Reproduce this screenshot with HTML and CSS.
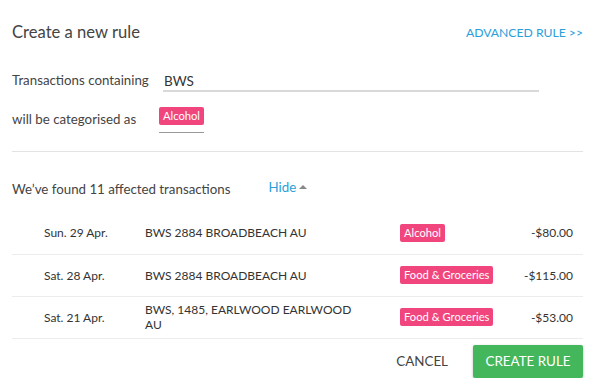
FILE: index.html
```html
<!DOCTYPE html>
<html lang="en">
<head>
    <meta charset="UTF-8">
    <meta name="viewport" content="width=device-width, initial-scale=1.0">
    <title>Create a new rule</title>
    <link rel="stylesheet" href="styles.css">
</head>
<body>
    <div class="dialog">
        <div class="header">
            <h2 class="title">Create a new rule</h2>
            <a class="advanced" href="#">ADVANCED RULE &gt;&gt;</a>
        </div>
        <div class="field">
            <span class="label">Transactions containing</span>
            <div class="text-input">BWS</div>
        </div>
        <div class="field">
            <span class="label">will be categorised as</span>
            <div class="tag-input"><span class="tag">Alcohol</span></div>
        </div>
        <div class="found">
            <span>We’ve found 11 affected transactions</span>
            <a class="hide" href="#">Hide<span class="caret"></span></a>
        </div>
        <table class="txns">
            <tr>
                <td class="date">Sun. 29 Apr.</td>
                <td class="desc">BWS 2884 BROADBEACH AU</td>
                <td class="cat"><span class="tag">Alcohol</span></td>
                <td class="amount">-$80.00</td>
            </tr>
            <tr>
                <td class="date">Sat. 28 Apr.</td>
                <td class="desc">BWS 2884 BROADBEACH AU</td>
                <td class="cat"><span class="tag">Food &amp; Groceries</span></td>
                <td class="amount">-$115.00</td>
            </tr>
            <tr>
                <td class="date">Sat. 21 Apr.</td>
                <td class="desc">BWS, 1485, EARLWOOD EARLWOOD AU</td>
                <td class="cat"><span class="tag">Food &amp; Groceries</span></td>
                <td class="amount">-$53.00</td>
            </tr>
        </table>
        <div class="actions">
            <button class="btn cancel">CANCEL</button>
            <button class="btn create">CREATE RULE</button>
        </div>
    </div>
</body>
</html>
```
FILE: styles.css
```css
body{
    margin: 0;
    background: #fff;
    font-family: Lato, "Open Sans", sans-serif;
    color: #444;
}
.dialog{
    padding: 0 17px 0 12px;
}
.header{
    display: flex;
    justify-content: space-between;
    align-items: center;
    padding: 22px 0 18px;
    height: 20px;
}
.title{
    margin: 0;
    font-size: 16.6px;
    line-height: 20px;
    font-weight: normal;
    color: #444;
}
.advanced{
    color: #2b9fd9;
    text-decoration: none;
    font-size: 12.2px;
}
.field{
    display: flex;
    align-items: center;
    height: 39px;
    font-size: 13.3px;
}
.label{
    width: 147px;
}
.text-input{
    width: 373px;
    padding: 5px 2px 1px 1px;
    border-bottom: 2px solid #d9d9d9;
    color: #333;
    margin-left: 4px;
    font-size: 13.5px;
}
.field .tag-input{
    align-self: flex-start;
    margin-top: 8px;
    padding-bottom: 7px;
    border-bottom: 1px solid #999;
}
.tag{
    display: inline-block;
    background: #f1467d;
    color: #fff;
    font-size: 11.2px;
    padding: 2px 4px;
    border-radius: 2px;
    line-height: 14px;
}
.found{
    display: flex;
    align-items: center;
    border-top: 1px solid #e3e3e3;
    margin-top: 13px;
    padding: 27px 0 14px;
    height: 19px;
    font-size: 13.3px;
}
.hide{
    margin-left: 38px;
    color: #2b9fd9;
    text-decoration: none;
    margin-top: -3px;
}
.caret{
    display: inline-block;
    margin-left: 3px;
    vertical-align: 3px;
    border-left: 4px solid transparent;
    border-right: 4px solid transparent;
    border-bottom: 4px solid #888;
}
.txns{
    width: 100%;
    table-layout: fixed;
    border-collapse: collapse;
    font-size: 12px;
    color: #333;
}
.txns td{
    box-sizing: border-box;
    border-bottom: 1px solid #ececec;
    height: 42px;
    padding: 0;
}
.txns .date{
    width: 133px;
    padding-left: 32px;
}
.txns .desc{
    width: 255px;
    padding-right: 35px;
    line-height: 15px;
}
.txns .cat{
    width: 110px;
}
.txns .amount{
    text-align: right;
    padding-right: 10px;
}
.actions{
    display: flex;
    justify-content: flex-end;
    align-items: center;
    gap: 25px;
    padding-top: 6px;
}
.btn{
    font-family: Lato, sans-serif;
    font-size: 13.4px;
    border: none;
    background: none;
    cursor: pointer;
    padding: 0;
}
.cancel{
    color: #444;
}
.create{
    background: #44b65c;
    color: #fff;
    width: 110px;
    height: 33px;
    border-radius: 2px;
    box-shadow: 0 1px 3px rgba(0,0,0,0.25);
}
```
